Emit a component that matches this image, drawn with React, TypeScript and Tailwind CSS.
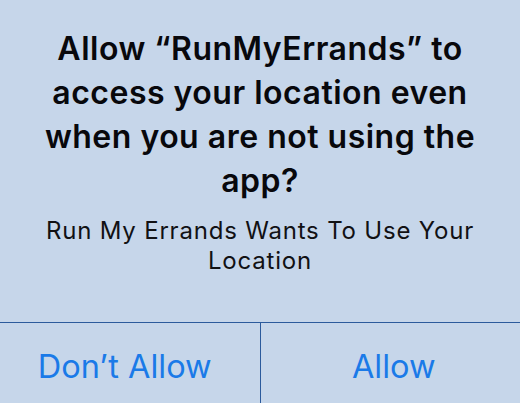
export default function App() {
  return (
    <div
      className="w-[520px] h-[403px] bg-[#c6d6ea] flex flex-col overflow-hidden"
      style={{ fontFamily: 'Inter, "Noto Sans", sans-serif' }}
    >
      <div className="pt-[27px] px-2 text-center">
        <div className="text-[32px] leading-[44px] font-semibold text-[#08080c] tracking-[0.5px]">
          Allow “RunMyErrands” to
          <br />
          access your location even
          <br />
          when you are not using the
          <br />
          app?
        </div>
        <div className="mt-[13px] text-[24px] leading-[30px] text-[#111114] tracking-[0.8px] px-4">
          Run My Errands Wants To Use Your Location
        </div>
      </div>
      <div className="flex-1" />
      <div className="h-[81px] border-t border-[#2b5a9c] flex">
        <div className="flex-1 flex items-center justify-center pt-[8px] text-[32.5px] text-[#1a7ae8]">
          <span className="mr-[10px]">Don’t Allow</span>
        </div>
        <div className="w-px bg-[#2b5a9c]" />
        <div className="flex-1 flex items-center justify-center pt-[8px] text-[32.5px] text-[#1a7ae8]">
          <span className="ml-[7px]">Allow</span>
        </div>
      </div>
    </div>
  );
}
